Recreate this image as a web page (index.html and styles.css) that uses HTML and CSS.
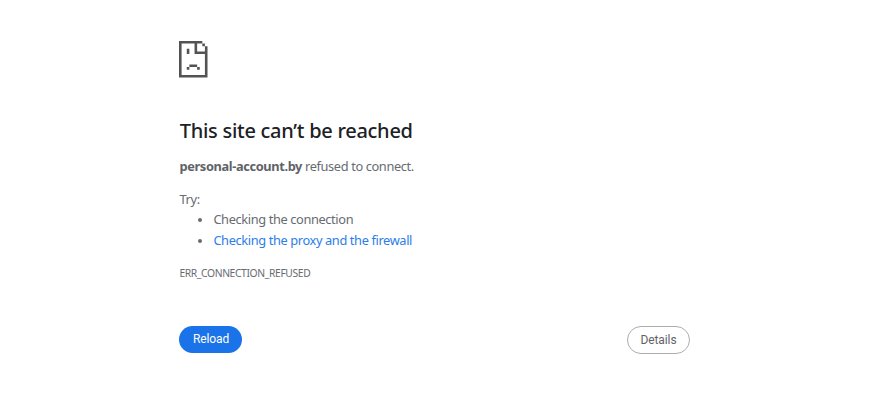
FILE: index.html
```html
<!DOCTYPE html>
<html lang="en">
<head>
<meta charset="utf-8">
<title>personal-account.by</title>
<link rel="stylesheet" href="styles.css">
</head>
<body>
<main class="page">
  <svg class="icon" viewBox="0 0 11 14" preserveAspectRatio="none" fill="#535353" aria-hidden="true">
    <path d="M0 0H9V1H7V4H11V5H6V1H1V13H10V5H11V14H0ZM9 1H10V2H9ZM10 2H11V5H10ZM3 3H4V5H3ZM4 9H7V10H4ZM3 10H4V11H3ZM7 10H8V11H7Z"/>
  </svg>
  <h1>This site can’t be reached</h1>
  <p class="summary"><strong>personal-account.by</strong> refused to connect.</p>
  <p class="try">Try:</p>
  <ul>
    <li>Checking the connection</li>
    <li><a class="proxy">Checking the proxy and the firewall</a></li>
  </ul>
  <div class="code">ERR_CONNECTION_REFUSED</div>
  <div class="buttons">
    <button class="reload">Reload</button>
    <button class="details">Details</button>
  </div>
</main>
</body>
</html>
```
FILE: styles.css
```css
body {
  margin: 0;
  background: #fff;
  color: #676b70;
  font: 12.8px/20.5px "Noto Sans", sans-serif;
  letter-spacing: -0.37px;
}
.page {
  box-sizing: border-box;
  width: 511px;
  margin-left: 179px;
  padding-top: 41px;
}
.icon {
  display: block;
  width: 28.5px;
  height: 36.5px;
}
h1 {
  margin: 40px 0 0;
  padding-left: 0.7px;
  color: #202124;
  font-size: 20px;
  font-weight: 500;
  line-height: 26px;
  letter-spacing: -0.27px;
  white-space: nowrap;
}
p {
  margin: 0;
  padding-left: 0.5px;
  white-space: nowrap;
}
.summary { margin-top: 12px; }
.summary strong { color: #5f6368; }
.try { margin-top: 12.5px; }
ul {
  margin: 0;
  padding-left: 34.4px;
}
li::marker { font-size: 11.5px; }
.proxy { color: #2b7de9; }
.code {
  margin-top: 12.5px;
  padding-left: 0.4px;
  font-size: 10.3px;
  letter-spacing: -0.36px;
}
.buttons {
  display: flex;
  justify-content: space-between;
  margin-top: 42.5px;
}
button {
  box-sizing: border-box;
  height: 27px;
  width: 63px;
  padding: 0;
  border: 0;
  border-radius: 14px;
  font: 400 12px Roboto, sans-serif;
  letter-spacing: -0.1px;
}
.reload {
  padding-left: 1px;
  background: #1a73e8;
  color: #fff;
}
.details {
  height: 28px;
  border: 1px solid #a8adb2;
  background: #fff;
  color: #5f6368;
}
```
